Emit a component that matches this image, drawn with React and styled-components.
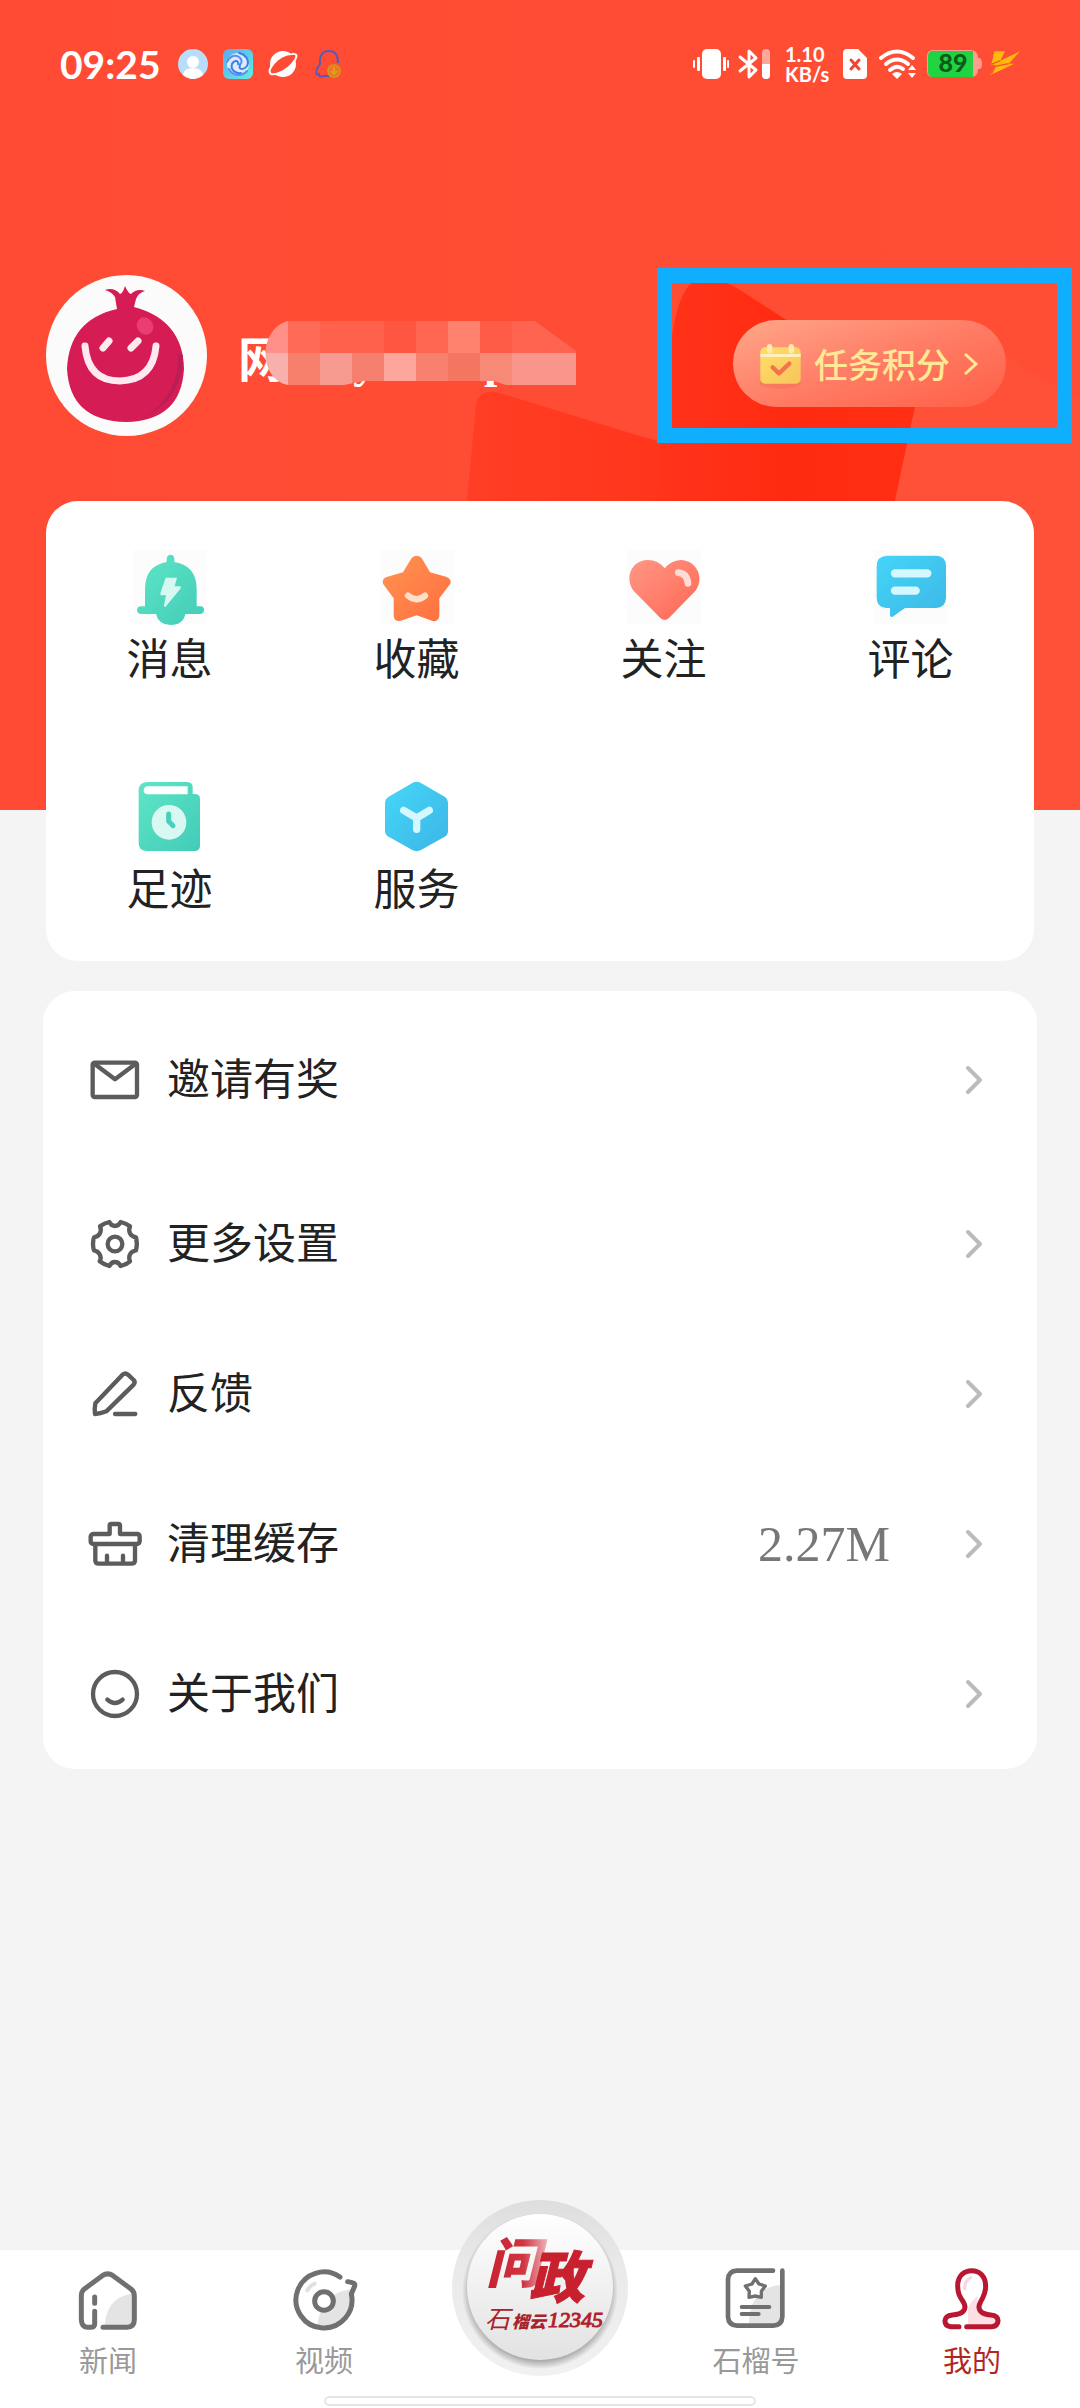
import React from 'react';
import styled, { createGlobalStyle } from "styled-components"

const GlobalStyle = createGlobalStyle`
    body {
        margin: 0;
        background-color: #f4f4f4;
    }
    * {
        box-sizing: border-box;
    }
    button {
        border: none;
        background: none;
        padding: 0;
        font-family: inherit;
        cursor: pointer;
    }
    a {
        color: inherit;
        text-decoration: none;
    }
    svg {
        display: block;
        flex-shrink: 0;
        overflow: visible;
    }
`

const AppBox = styled.div`
    position: relative;
    min-height: 100vh;
    display: flex;
    flex-direction: column;
    font-family: "Liberation Serif", "Noto Sans CJK SC", serif;
    color: #222;
`

const HeroArt = styled.svg`
    position: absolute;
    top: 0;
    left: 0;
    z-index: -1;
    width: 100%;
    height: 810px;
`

const StatusBar = styled.div`
    height: 128px;
    padding: 0 60px;
    display: flex;
    align-items: center;
    justify-content: space-between;
    color: white;
`

const StatusGroup = styled.div`
    display: flex;
    align-items: center;
    gap: ${props => props.$gap}px;
`

const Clock = styled.span`
    min-width: 103px;
    font-family: Lato, sans-serif;
    font-size: 39px;
    font-weight: 700;
    line-height: 40px;
`

const Speed = styled.span`
    width: 52px;
    padding-left: 2px;
    display: flex;
    flex-direction: column;
    font-family: Lato, sans-serif;
    font-size: 20px;
    font-weight: 700;
    line-height: 20px;
`

const Profile = styled.header`
    margin-top: 140px;
    padding: 0 8px 0 46px;
    display: flex;
    align-items: center;
`

const NameBox = styled.div`
    position: relative;
    flex-grow: 1;
    margin-left: 31px;
    padding-top: 10px;
    display: flex;
    color: white;
    font-size: 48px;
    font-weight: bold;
    line-height: 58px;
`

const NamePart = styled.span`
    margin-left: ${props => props.$before || 0}px;
`

const Mosaic = styled.svg`
    position: absolute;
    left: 27px;
    top: -1px;
`

const TaskFrame = styled.div`
    border: 15px solid #10aeff;
    padding: 37px 51px 21px 61px;
`

const TaskButton = styled.button`
    width: 273px;
    height: 87px;
    padding: 0 27px;
    border-radius: 44px;
    display: flex;
    align-items: center;
    gap: 13px;
    background: linear-gradient(160deg, #ffa386 5%, #ff7d66 50%, #ff654c 90%);
    color: #ffe896;
    font-family: "Noto Sans CJK SC", sans-serif;
    font-size: 34px;
    font-weight: 500;
    line-height: 40px;
    white-space: nowrap;
`

const ShortcutCard = styled.nav`
    margin: 58px 46px 0;
    border-radius: 32px;
    background-color: white;
    display: grid;
    grid-template-columns: repeat(4, 1fr);
`

const Shortcut = styled.a`
    height: 230px;
    padding-top: 49px;
    display: flex;
    flex-direction: column;
    align-items: center;
    gap: 8px;
    font-size: 43px;
    line-height: 58px;
`

const ShortcutIcon = styled.svg`
    width: 74px;
    height: 74px;
    background-color: ${props => props.$tint ? "#fcfcfc" : "transparent"};
`

const MenuCard = styled.div`
    margin: 30px 43px 0;
    border-radius: 32px;
    background-color: white;
`

const MenuRow = styled.button`
    width: 100%;
    height: ${props => props.$tall ? 178 : 150}px;
    padding: 0 51px 0 45px;
    display: flex;
    align-items: center;
    color: #222;
    font-size: 43px;
    line-height: 58px;
`

const MenuLabel = styled.span`
    flex-grow: 1;
    margin-left: 25px;
    padding-top: 2px;
    text-align: left;
`

const MenuValue = styled.span`
    margin-right: 72px;
    color: #777;
    font-size: 50px;
`

const TabBar = styled.nav`
    margin-top: auto;
    height: 158px;
    position: relative;
    background-color: white;
    display: grid;
    grid-template-columns: repeat(5, 1fr);
`

const Tab = styled.a`
    padding-top: 18px;
    display: flex;
    flex-direction: column;
    align-items: center;
    gap: 12px;
    color: ${props => props.$active ? "#b3261e" : "#999"};
    font-size: 29px;
    line-height: 36px;
`

const CenterTab = styled.a`
    justify-self: center;
    margin-top: -50px;
    width: 177px;
    height: 177px;
`

const HomeIndicator = styled.div`
    position: absolute;
    bottom: 2px;
    left: 30%;
    right: 30%;
    height: 10px;
    border: 2px solid #e6e6e6;
    border-radius: 5px;
    background-color: white;
`

const stroke = {
    fill: "none",
    stroke: "#5c5c5c",
    strokeWidth: 13,
    strokeLinecap: "round",
    strokeLinejoin: "round",
}

const tabStroke = { ...stroke, stroke: "#707070", strokeWidth: 16 }

const Gradient = ({ id, from, to }) => (
    <linearGradient id={id} x1="0" y1="0" x2="1" y2="1">
        <stop offset="0" stopColor={from} />
        <stop offset="1" stopColor={to} />
    </linearGradient>
)

const Background = () => (
    <HeroArt viewBox="0 0 1080 810" preserveAspectRatio="none" aria-hidden="true">
        <defs>
            <linearGradient id="back" x1="0" y1="0" x2="1" y2="0">
                <stop offset="0" stopColor="#ff4b33" />
                <stop offset="1" stopColor="#ff4e35" />
            </linearGradient>
            <linearGradient id="blockLeft" x1="0" y1="0" x2="1" y2="0">
                <stop offset="0" stopColor="#ff3e25" />
                <stop offset="1" stopColor="#ff341a" />
            </linearGradient>
            <linearGradient id="blockRight" x1="0" y1="0" x2="1" y2="0">
                <stop offset="0" stopColor="#ff341b" />
                <stop offset="0.5" stopColor="#ff2b10" />
                <stop offset="1" stopColor="#ff2f14" />
            </linearGradient>
        </defs>
        <rect width="1080" height="810" fill="url(#back)" />
        <path d="M868 322L960 330L1080 400V810H868Z" fill="#ff5137" />
        <path d="M476 404Q480 388 500 393L640 436L700 452V510H466Z" fill="url(#blockLeft)" />
        <path d="M672 335Q680 283 700 278Q718 276 740 290L785 319L915 390Q918 398 912 420L893 510H655Z" fill="url(#blockRight)" />
    </HeroArt>
)

const Avatar = () => (
    <svg width="161" height="161" viewBox="0 0 161 161" role="img" aria-label="头像">
        <circle cx="80.500" cy="80.500" r="80.500" fill="#fbfbfb" />
        <path d="M71 34L69 22Q66 17 59 15Q68 12 74 19Q77 18 79 11Q82 18 85 19Q91 13 99 16Q92 18 90 24L88 32Q137 45 138 94Q135 146 80 147Q24 146 21 94Q23 45 71 34Z" fill="#d61c55" />
        <path d="M137 80Q137 124 99 142Q134 119 132 78Z" fill="#b91f55" />
        <ellipse cx="99" cy="51" rx="8" ry="9" transform="rotate(-35 99 51)" fill="#ea3d70" />
        <g fill="none" stroke="#ffe9f1" strokeWidth="7" strokeLinecap="round">
            <path d="M39 71Q42 106 74 106Q107 105 110 71" />
            <path d="M57 73L63 66M85 73L92 66" />
        </g>
    </svg>
)

const mosaicCells = [
    ["#ff9088", "#ff6b57", "#ff614c", "#ff614c", "#ff5642", "#ff6752", "#ff826f", "#ff5c47", "#ff6450", "#ff6450"],
    ["#f8b0ac", "#f7806d", "#f79a90", "#f58070", "#ffa69c", "#f7806f", "#f57560", "#f78a76", "#fa958c", "#fa958c"],
]

const NameMosaic = () => (
    <Mosaic width="311" height="64" viewBox="-9 0 311 64" aria-hidden="true">
        <clipPath id="brush">
            <path d="M14 0H261L302 30V64H232L220 60H90L70 64H14C-16 58 -16 8 14 0Z" />
        </clipPath>
        <g clipPath="url(#brush)" shapeRendering="crispEdges">
            {mosaicCells.map((row, y) => row.map((color, x) => {
                return <rect key={x + "-" + y} x={x * 32 - 18} y={y * 32} width="32" height="32" fill={color} />
            }))}
        </g>
    </Mosaic>
)

const StatusIcons = () => (
    <>
        <svg width="30" height="30" viewBox="0 0 30 30">
            <circle cx="15" cy="15" r="15" fill="#b9dcfb" />
            <circle cx="15" cy="13" r="6" fill="white" />
            <path d="M5 26Q6 19 15 19Q24 19 25 26Q15 34 5 26Z" fill="white" />
        </svg>
        <svg width="30" height="30" viewBox="0 0 30 30">
            <defs><Gradient id="swirl" from="#5aa9ee" to="#5cf0e4" /></defs>
            <rect width="30" height="30" rx="6" fill="url(#swirl)" />
            <circle cx="15" cy="15" r="11" fill="#d9ecff" />
            <g fill="none" stroke="#3f7fe0" strokeWidth="2" strokeLinecap="round">
                <path d="M15 15C16 11 11 11 9 15C7 21 13 25 18 24" />
                <path d="M15 15C19 16 20 11 16 8C11 5 6 8 4 13" stroke="#5b8ff0" />
                <path d="M17 16C15 20 20 22 24 17C27 11 22 5 16 4" />
                <path d="M6 20C9 26 17 29 24 22" stroke="#5b8ff0" />
            </g>
        </svg>
        <svg width="30" height="30" viewBox="0 0 30 30">
            <circle cx="15" cy="15" r="13" fill="white" />
            <path d="M3 25Q-1 22 6 14Q14 5 24 5Q31 4 27 11Q21 20 11 24Q6 26 3 25Z" fill="#ff4b33" stroke="white" strokeWidth="2" />
        </svg>
        <svg width="30" height="30" viewBox="0 0 30 30">
            <path d="M10 27Q6 29 6 25Q2 27 4 20L7 15Q6 2 16 2Q25 2 25 14M10 27H16" fill="none" stroke="#5a5ab4" strokeWidth="2" />
            <circle cx="21" cy="22" r="6" fill="#ff6a2c" stroke="#c79a1c" strokeWidth="2" />
            <path d="M21 18V25M18 22L21 25L24 22" fill="none" stroke="#d7a515" strokeWidth="2" />
        </svg>
    </>
)

const SystemIcons = () => (
    <>
        <svg width="37" height="30" viewBox="0 0 37 30" fill="white">
            <rect x="9" width="19" height="30" rx="5" />
            <rect x="0" y="11" width="2" height="8" rx="1" />
            <rect x="4" y="8" width="3" height="14" rx="1" />
            <rect x="30" y="8" width="3" height="14" rx="1" />
            <rect x="34" y="11" width="2" height="8" rx="1" />
        </svg>
        <svg width="37" height="30" viewBox="0 0 37 30">
            <path d="M2 8L18 21L11 28V2L18 9L2 22" fill="none" stroke="white" strokeWidth="3" strokeLinecap="round" strokeLinejoin="round" />
            <rect x="24" width="8" height="30" rx="4" fill="#ffa79b" />
            <path d="M24 15H32V26A4 4 0 0 1 24 26Z" fill="white" />
        </svg>
        <Speed>
            <span>1.10</span>
            <span>KB/s</span>
        </Speed>
        <svg width="26" height="30" viewBox="0 0 26 30">
            <path d="M4 0H15L24 9V26Q24 30 20 30H4Q0 30 0 26V4Q0 0 4 0Z" fill="white" />
            <path d="M8 11L16 20M16 11L8 20" stroke="#f0452f" strokeWidth="3" strokeLinecap="round" />
        </svg>
        <svg width="42" height="30" viewBox="0 0 42 30">
            <g fill="none" stroke="white" strokeWidth="4" strokeLinecap="round">
                <path d="M4 9Q20 -4 36 9" />
                <path d="M9 15Q20 6 31 15" />
                <path d="M13 21Q20 15 26 20" />
            </g>
            <path d="M15 25Q20 21 25 25L20 30Z" fill="white" />
            <path d="M35 16L39 21H31ZM35 29L31 24H39Z" fill="white" />
        </svg>
        <svg width="55" height="28" viewBox="0 0 55 28">
            <path d="M6 0H43Q51 0 51 8H53Q55 10 55 14Q55 18 53 19H51Q51 27 44 27H6Q0 27 0 21V6Q0 0 6 0Z" fill="#ff9c90" />
            <path d="M6 1H46V27H6Q1 27 1 21V6Q1 1 6 1Z" fill="#22d341" />
            <text x="26" y="22" textAnchor="middle" fontFamily="Lato, sans-serif" fontWeight="900" fontSize="25" fill="#0b5c1a">89</text>
        </svg>
        <svg width="30" height="28" viewBox="930 62 90 84">
            <path d="M943 66H975L961 94L1020 66L986 103H1003L930 138L946 106H934Z" fill="#ffb90c" />
            <path d="M961 94L936 104M986 103L946 111L934 134" fill="none" stroke="#ff4b33" strokeWidth="4" />
        </svg>
    </>
)

const CalendarIcon = () => (
    <svg width="41" height="40" viewBox="358 282 123 120" aria-hidden="true">
        <defs><Gradient id="calendar" from="#ffdf6a" to="#f8c45a" /></defs>
        <ellipse cx="418" cy="400" rx="62" ry="16" fill="#e85a3a" opacity="0.250" />
        <rect x="359" y="292" width="121" height="109" rx="14" fill="url(#calendar)" />
        <path d="M359 312H480V321H359Z" fill="#fff1bb" />
        <rect x="379" y="282" width="16" height="28" rx="8" fill="#ffe9ac" />
        <rect x="444" y="282" width="16" height="28" rx="8" fill="#ffe9ac" />
        <path d="M396 352L415 370L446 341" fill="none" stroke="#f4734c" strokeWidth="13" strokeLinecap="round" strokeLinejoin="round" />
    </svg>
)

const shortcuts = [
    {
        label: "消息",
        view: "276 180 222 222",
        tint: true,
        icon: <>
            <Gradient id="bell" from="#5fe6c6" to="#42cbb8" />
            <path d="M377 216V206Q379 194 389 194Q399 194 400 206V216Q466 226 467 296V349H478Q489 350 489 360Q489 371 478 372H433Q426 405 389 405Q353 405 345 372H299Q288 370 288 360Q289 350 300 349H312V296Q312 228 377 216Z" fill="url(#bell)" />
            <path d="M374 263H408L401 289H418Q422 293 417 298L373 351Q368 351 369 346L375 316H360Q357 314 358 310Z" fill="#d5f8f0" />
        </>,
    },
    {
        label: "收藏",
        view: "1020 180 222 222",
        tint: true,
        icon: <>
            <Gradient id="star" from="#ff9451" to="#ff6e3f" />
            <path d="M1115 204Q1130 190 1145 204L1170 247L1218 260Q1236 267 1231 281L1198 325V378Q1195 396 1178 393L1130 376L1080 393Q1063 395 1061 378V325L1029 281Q1025 266 1040 261L1089 247Z" fill="url(#star)" />
            <path d="M1104 317Q1129 338 1155 317" fill="none" stroke="#ffdfcb" strokeWidth="19" strokeLinecap="round" />
        </>,
    },
    {
        label: "关注",
        view: "198 180 222 222",
        tint: true,
        icon: <>
            <Gradient id="heart" from="#ff9885" to="#ff6653" />
            <path d="M311 235Q291 210 260 210C210 211 189 266 219 304L298 384Q311 396 324 384L402 304C432 267 409 211 359 210Q331 211 311 235Z" fill="url(#heart)" />
            <path d="M352 248Q378 250 381 280" fill="none" stroke="#ffdcd6" strokeWidth="20" strokeLinecap="round" />
        </>,
    },
    {
        label: "评论",
        view: "940 180 222 222",
        tint: true,
        icon: <>
            <Gradient id="bubble" from="#44d5f7" to="#3db8e6" />
            <path d="M978 197H1126Q1156 198 1156 228V323Q1155 353 1126 354H1033L996 380Q989 383 988 376V354H977Q948 352 948 323V228Q948 199 978 197Z" fill="url(#bubble)" />
            <path d="M1003 250H1100M1003 302H1065" stroke="#d5f7ff" strokeWidth="25" strokeLinecap="round" />
        </>,
    },
    {
        label: "足迹",
        view: "276 870 222 222",
        icon: <>
            <Gradient id="book" from="#5fe6c6" to="#42cbb8" />
            <path d="M318 876H439Q455 877 455 892V912H463Q477 913 477 926V1069Q476 1082 463 1083H315Q293 1081 293 1059V900Q294 878 318 876ZM319 889Q308 891 308 902Q309 912 320 913H440V889Z" fill="url(#book)" fillRule="evenodd" />
            <circle cx="384" cy="997" r="52" fill="#daf8f2" />
            <path d="M383 972V994L396 1007" fill="none" stroke="#47d0bc" strokeWidth="15" strokeLinecap="round" strokeLinejoin="round" />
        </>,
    },
    {
        label: "服务",
        view: "1020 870 222 222",
        icon: <>
            <Gradient id="hexagon" from="#46d7f8" to="#3cb5e6" />
            <path d="M1117 879Q1130 872 1143 879L1214 920Q1224 927 1224 940V1022Q1224 1034 1214 1040L1143 1080Q1130 1087 1117 1080L1046 1040Q1035 1034 1035 1022V940Q1035 927 1046 920Z" fill="url(#hexagon)" />
            <path d="M1091 961L1130 984L1168 961M1130 984V1018" fill="none" stroke="#d5f7ff" strokeWidth="22" strokeLinecap="round" strokeLinejoin="round" />
        </>,
    },
]

const menuItems = [
    {
        label: "邀请有奖",
        view: "144 228 162 144",
        icon: <>
            <rect x="158" y="248" width="133" height="103" rx="6" />
            <path d="M164 252L225 298L286 252" />
        </>,
    },
    {
        label: "更多设置",
        view: "144 720 162 144",
        icon: <>
            <circle cx="225" cy="792" r="22" />
            <path d="M208 726Q214 738 225 738Q236 738 242 726Q257 729 270 739Q265 751 270 760Q276 770 288 772Q293 792 288 811Q275 813 270 823Q265 832 270 844Q259 854 242 858Q236 846 225 846Q214 846 208 858Q192 854 179 844Q185 832 179 823Q174 813 162 811Q156 792 162 772Q175 770 180 760Q185 751 180 739Q193 729 208 726Z" />
        </>,
    },
    {
        label: "反馈",
        view: "144 1170 162 144",
        icon: <>
            <path d="M165 1302Q163 1285 166 1270L249 1183Q256 1177 264 1184L281 1200Q287 1207 281 1214L199 1294Q181 1301 165 1302Z" />
            <path d="M225 1302H286" />
        </>,
    },
    {
        label: "清理缓存",
        value: "2.27M",
        view: "144 180 162 144",
        icon: <>
            <path d="M209 222V196Q209 192 214 192H235Q240 192 240 197V222H292Q299 223 299 230V244Q298 252 290 252H160Q152 251 152 244V230Q153 223 160 222Z" />
            <path d="M166 254V302Q167 311 176 311H275Q284 311 285 302V254M201 287V309M249 287V309" />
        </>,
    },
    {
        label: "关于我们",
        view: "144 630 162 144",
        icon: <>
            <circle cx="225" cy="702" r="66" />
            <path d="M202 719Q225 739 248 719" />
        </>,
    },
]

const tabs = [
    {
        label: "新闻",
        view: "138 266 192 192",
        icon: <>
            <path d="M225 438C226 382 260 346 310 343V438Z" fill="#e4e4e4" />
            <path {...tabStroke} d="M219 444H291Q313 443 313 421V349Q313 336 302 328L249 289Q233 278 217 289L164 328Q154 336 154 349V421Q155 444 173 444H184Q194 443 194 434V396M194 353V372" strokeWidth="15" />
        </>,
    },
    {
        label: "视频",
        view: "786 266 192 192",
        icon: <>
            <path d="M863 444C864 386 898 336 966 330L967 365C964 413 928 449 863 444Z" fill="#e4e4e4" />
            <circle cx="882" cy="365" r="28" fill="white" stroke="#707070" strokeWidth="15" />
            <path d="M832 333Q839 319 854 313" fill="none" stroke="#e0e0e0" strokeWidth="12" strokeLinecap="round" />
            <path {...tabStroke} d="M930 293A84 84 0 1 0 964 344L974 320Q976 311 967 310L953 307" strokeWidth="15" />
        </>,
    },
    null,
    {
        label: "石榴号",
        view: "192 266 192 192",
        icon: <>
            <path d="M267 434C266 370 297 322 361 317V420Q359 434 345 434Z" fill="#e4e4e4" />
            <path {...tabStroke} d="M339 274H231Q205 275 204 301V412Q205 438 231 439H340Q366 438 367 412V274" strokeWidth="14" />
            <path {...tabStroke} d="M286 298L297 314L316 320L304 336V354L286 350L267 354L268 336L256 320L276 314Z" fill="white" strokeWidth="10" />
            <path {...tabStroke} d="M245 383H328M245 404H296" strokeWidth="12" />
        </>,
    },
    {
        label: "我的",
        active: true,
        view: "840 266 192 192",
        icon: <>
            <path d="M924 436V390Q930 365 954 350Q948 380 957 394Q970 406 1000 409Q1017 425 1002 436Z" fill="#fbdfe4" />
            <path d="M914 329Q914 304 932 295" fill="none" stroke="#f8d6dc" strokeWidth="9" strokeLinecap="round" />
            <path {...tabStroke} d="M897 442H872Q854 440 855 424Q856 409 877 407C909 405 923 390 910 368C898 350 893 341 893 319C893 290 912 274 935 274C959 274 977 291 977 321C977 341 971 352 962 367C949 390 962 404 992 407Q1015 409 1014 425Q1013 440 996 442H920" stroke="#b91731" strokeWidth="15" />
        </>,
    },
]

const CenterLogo = () => (
    <svg width="177" height="177" viewBox="0 0 177 177">
        <defs>
            <linearGradient id="ring" x1="0" y1="0" x2="0" y2="1">
                <stop offset="0" stopColor="#dedede" />
                <stop offset="0.400" stopColor="#eaeaea" />
                <stop offset="1" stopColor="#f1f1f1" />
            </linearGradient>
            <linearGradient id="disc" x1="0" y1="0" x2="0" y2="1">
                <stop offset="0" stopColor="#ffffff" />
                <stop offset="1" stopColor="#e2e2e2" />
            </linearGradient>
            <radialGradient id="discShadow">
                <stop offset="0.880" stopColor="#a5a5a5" />
                <stop offset="1" stopColor="#a5a5a5" stopOpacity="0" />
            </radialGradient>
            <linearGradient id="fade" x1="0" y1="0" x2="1" y2="0">
                <stop offset="0" stopColor="#c8202f" />
                <stop offset="0.600" stopColor="#cf3541" />
                <stop offset="1" stopColor="#eeb5b9" />
            </linearGradient>
        </defs>
        <circle cx="88" cy="88" r="88" fill="url(#ring)" />
        <circle cx="88" cy="91" r="78" fill="url(#discShadow)" />
        <circle cx="88" cy="87" r="73" fill="url(#disc)" />
        <g fontFamily="Noto Sans CJK SC, sans-serif" fontWeight="900" fontStyle="italic">
            <text x="34" y="83" fontSize="54" fill="url(#fade)">问</text>
            <text x="77" y="98" fontSize="56" fill="#c8202f" stroke="#c8202f" strokeWidth="1">政</text>
            <text x="33" y="128" fontSize="25" fontWeight="400" fill="#a8222c">石</text>
            <text x="60" y="128" fontSize="17" fill="#a8222c">榴云</text>
        </g>
        <text x="96" y="127" fontFamily="Liberation Serif, serif" fontStyle="italic" fontSize="22" fill="#b3202c" stroke="#b3202c" strokeWidth="1">12345</text>
    </svg>
)

class Mine extends React.Component {
    render() {
        return (
        <AppBox>
        <GlobalStyle />
        <Background />
        <StatusBar>
            <StatusGroup $gap={15}>
                <Clock>09:25</Clock>
                <StatusIcons />
            </StatusGroup>
            <StatusGroup $gap={8}>
                <SystemIcons />
            </StatusGroup>
        </StatusBar>
        <Profile>
            <Avatar />
            <NameBox>
                <NamePart>网</NamePart>
                <NamePart $before={67}>y</NamePart>
                <NamePart $before={107}>p</NamePart>
                <NameMosaic />
            </NameBox>
            <TaskFrame>
                <TaskButton>
                    <CalendarIcon />
                    任务积分
                    <svg width="16" height="24" viewBox="0 0 16 24" aria-hidden="true">
                        <path d="M2 2L13 12L2 22" fill="none" stroke="#ffe896" strokeWidth="3" />
                    </svg>
                </TaskButton>
            </TaskFrame>
        </Profile>
        <ShortcutCard>
            {shortcuts.map((item) => {
            return <Shortcut key={item.label} href="#">
                <ShortcutIcon viewBox={item.view} $tint={item.tint} aria-hidden="true">{item.icon}</ShortcutIcon>
                {item.label}
            </Shortcut>
            })}
        </ShortcutCard>
        <MenuCard>
            {menuItems.map((item, index) => {
            return <MenuRow key={item.label} $tall={index === 0}>
                <svg width="54" height="48" viewBox={item.view} aria-hidden="true" {...stroke}>{item.icon}</svg>
                <MenuLabel>{item.label}</MenuLabel>
                {item.value && <MenuValue>{item.value}</MenuValue>}
                <svg width="24" height="32" viewBox="0 0 24 32" aria-hidden="true">
                    <path d="M6 4L18 16L6 28" fill="none" stroke="#bbb" strokeWidth="4" strokeLinecap="round" strokeLinejoin="round" />
                </svg>
            </MenuRow>
            })}
        </MenuCard>
        <TabBar>
            {tabs.map((tab) => {
            if (!tab) {
                return <CenterTab key="center" href="#"><CenterLogo /></CenterTab>
            }
            return <Tab key={tab.label} href="#" $active={tab.active}>
                <svg width="64" height="64" viewBox={tab.view} aria-hidden="true">{tab.icon}</svg>
                {tab.label}
            </Tab>
            })}
            <HomeIndicator />
        </TabBar>
        </AppBox>
        );
    }
}


export default Mine;
